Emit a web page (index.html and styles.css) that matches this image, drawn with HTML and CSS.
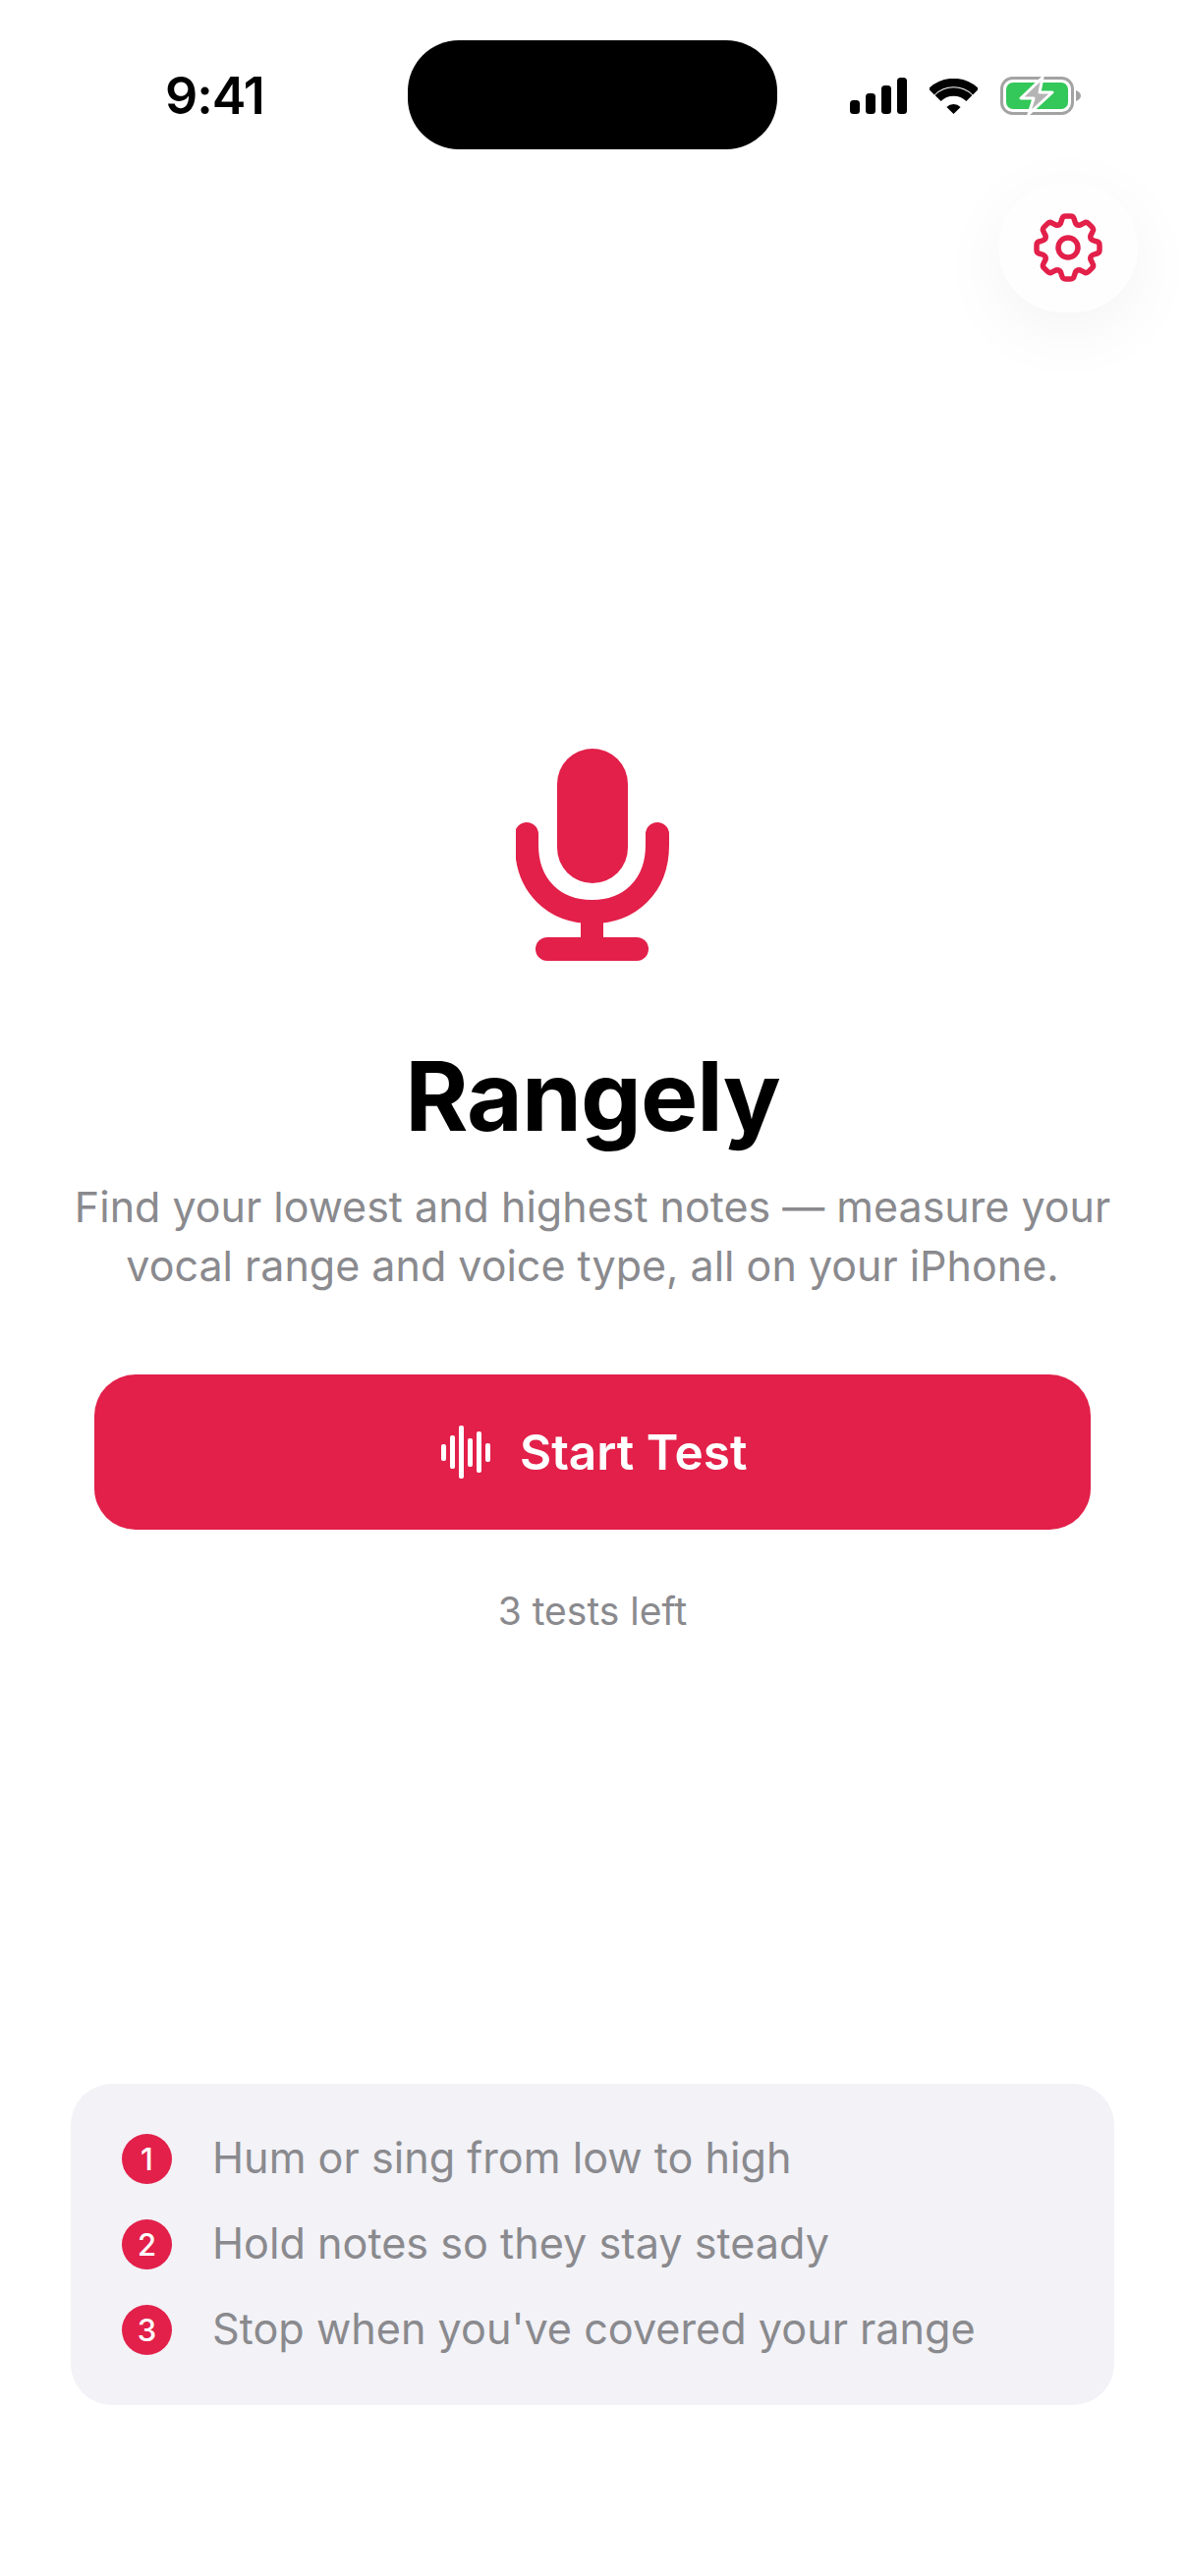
FILE: index.html
```html
<!DOCTYPE html>
<html lang="en">
<head>
  <meta charset="UTF-8" />
  <meta name="viewport" content="width=device-width, initial-scale=1.0"/>
  <title>Rangely</title>
  <link rel="stylesheet" href="styles.css">
</head>
<body>

  <div class="screen">
    <div class="status-bar">
      <div class="status-time">9:41</div>
      <div class="island"></div>
      <div class="status-icons">
        <svg class="icon-signal" viewBox="0 0 58 37">
          <rect x="0" y="23" width="10" height="14" rx="3.5"/>
          <rect x="16" y="16" width="10" height="21" rx="3.5"/>
          <rect x="32" y="8" width="10" height="29" rx="3.5"/>
          <rect x="48" y="0" width="10" height="37" rx="3.5"/>
        </svg>
        <svg class="icon-wifi" viewBox="0 0 49 36">
          <path class="wifi-band" d="M1.9 13.4A32 32 0 0 1 47.1 13.4"/>
          <path class="wifi-band" d="M8.6 20.1A22.5 22.5 0 0 1 40.4 20.1"/>
          <path d="M24.5 36L17.4 28.9A10 10 0 0 1 31.6 28.9Z"/>
        </svg>
        <svg class="icon-battery" viewBox="0 0 82 39">
          <rect class="batt-shell" x="1.5" y="1.5" width="72" height="36" rx="11"/>
          <path class="batt-nub" d="M77 14c3 1 5 3 5 5.500s-2 4.500-5 5.500z"/>
          <rect class="batt-fill" x="6" y="6" width="63" height="27" rx="7"/>
          <path class="batt-bolt" d="M43 1L21 22H34L29 38L53 16H40Z"/>
        </svg>
      </div>
    </div>

    <button class="settings-btn" type="button">
      <svg viewBox="-35 -35 70 70">
        <path class="gear" d="M-7.500-25L-6.200-29Q-5.500-32-2.500-32H2.500Q5.500-32 6.200-29L7.500-25Q9.180-22.170 12.370-22.980L16.120-24.890Q18.740-26.520 20.860-24.400L24.400-20.860Q26.520-18.740 24.890-16.120L22.980-12.370Q22.170-9.180 25-7.500L29-6.200Q32-5.500 32-2.500V2.500Q32 5.500 29 6.200L25 7.500Q22.170 9.180 22.980 12.370L24.890 16.120Q26.520 18.740 24.400 20.860L20.860 24.400Q18.740 26.520 16.120 24.890L12.370 22.980Q9.180 22.170 7.500 25L6.200 29Q5.500 32 2.500 32H-2.500Q-5.500 32-6.200 29L-7.500 25Q-9.180 22.170-12.370 22.980L-16.120 24.890Q-18.740 26.520-20.860 24.400L-24.400 20.860Q-26.520 18.740-24.890 16.120L-22.980 12.370Q-22.170 9.180-25 7.500L-29 6.200Q-32 5.500-32 2.500V-2.500Q-32-5.500-29-6.200L-25-7.500Q-22.170-9.180-22.980-12.370L-24.890-16.120Q-26.520-18.740-24.400-20.860L-20.860-24.400Q-18.740-26.520-16.120-24.890L-12.370-22.980Q-9.180-22.170-7.500-25Z"/>
        <circle class="gear" cx="0" cy="0" r="10"/>
      </svg>
    </button>

    <div class="hero">
      <svg class="mic" viewBox="0 0 157 216">
        <rect class="mic-fill" x="42" y="0" width="72" height="137" rx="36"/>
        <path class="mic-arc" d="M11 87V98C11 140 39 166 77.500 166C116 166 144 140 144 98V87"/>
        <rect class="mic-fill" x="66" y="170" width="23" height="30"/>
        <rect class="mic-fill" x="20" y="192" width="115" height="24" rx="12"/>
      </svg>
      <h1>Rangely</h1>
      <p class="tagline">Find your lowest and highest notes — measure your<br>vocal range and voice type, all on your iPhone.</p>
      <button class="start-btn" type="button">
        <span class="wave">
          <i class="w1"></i><i class="w2"></i><i class="w3"></i><i class="w4"></i><i class="w5"></i><i class="w6"></i>
        </span>
        Start Test
      </button>
      <div class="tests-left">3 tests left</div>
    </div>

    <ul class="tips">
      <li><span class="num">1</span><span class="tip-text">Hum or sing from low to high</span></li>
      <li><span class="num">2</span><span class="tip-text">Hold notes so they stay steady</span></li>
      <li><span class="num">3</span><span class="tip-text">Stop when you've covered your range</span></li>
    </ul>
  </div>

</body>
</html>
```

FILE: styles.css
```css
* {
  box-sizing: border-box;
}
body {
  margin: 0;
  background: #fff;
  font-family: Inter, "Noto Sans", sans-serif;
}
.screen {
  display: flex;
  flex-direction: column;
  height: 2622px;
  overflow: hidden;
}

/* status bar */
.status-bar {
  display: grid;
  grid-template-columns: 1fr 376px 1fr;
  align-items: center;
  height: 111px;
  margin-top: 41px;
}
.status-time {
  padding-left: 168px;
  padding-top: 2px;
  font-size: 52px;
  font-weight: 600;
  letter-spacing: -1px;
  color: #000;
}
.island {
  height: 111px;
  background: #000;
  border-radius: 52px;
}
.status-icons {
  display: flex;
  align-items: center;
  padding-left: 74px;
  padding-top: 2px;
}
.icon-signal {
  width: 58px;
  height: 37px;
}
.icon-wifi {
  width: 49px;
  height: 36px;
  margin-left: 23px;
}
.wifi-band {
  fill: none;
  stroke: #000;
  stroke-width: 8.5;
}
.icon-battery {
  width: 82px;
  height: 39px;
  margin-left: 23px;
}
.batt-shell {
  fill: none;
  stroke: #a3a3a3;
  stroke-width: 3;
}
.batt-nub {
  fill: #a3a3a3;
}
.batt-fill {
  fill: #34c759;
}
.batt-bolt {
  fill: #b4b4b4;
  stroke: #fff;
  stroke-width: 3;
  stroke-linejoin: round;
}

/* settings */
.settings-btn {
  display: flex;
  align-items: center;
  justify-content: center;
  align-self: flex-end;
  width: 142px;
  height: 132px;
  margin: 34px 48px 0 0;
  padding: 0;
  background: #fefefe;
  border: none;
  border-radius: 66px / 66px;
  box-shadow: 0 18px 70px rgba(0,0,0,0.05);
}
.settings-btn svg {
  width: 70px;
  height: 70px;
}
.gear {
  fill: none;
  stroke: #e2204a;
  stroke-width: 5.5;
  stroke-linejoin: round;
}

/* main block */
.hero {
  display: flex;
  flex-direction: column;
  align-items: center;
  margin-top: 444px;
}
.mic {
  width: 157px;
  height: 216px;
}
.mic-fill {
  fill: #e2204a;
}
.mic-arc {
  fill: none;
  stroke: #e2204a;
  stroke-width: 24;
  stroke-linecap: round;
}
h1 {
  margin: 80px 0 0;
  font-size: 98px;
  line-height: 116px;
  font-weight: 700;
  letter-spacing: -1px;
  color: #000;
}
.tagline {
  margin: 24px 0 0;
  font-size: 43px;
  line-height: 60px;
  text-align: center;
  color: #8a8a8e;
}
.start-btn {
  display: flex;
  align-items: center;
  justify-content: center;
  gap: 30px;
  width: 1014px;
  height: 158px;
  margin-top: 81px;
  padding: 0 0 0 4px;
  background: #e2204a;
  color: #fff;
  border: none;
  border-radius: 42px;
  font-family: inherit;
  font-size: 49.500px;
  font-weight: 600;
}
.wave {
  display: flex;
  align-items: center;
  gap: 4.500px;
}
.wave i {
  display: block;
  width: 4.500px;
  background: #fff;
  border-radius: 2px;
}
.w1 { height: 17px; }
.w2 { height: 34px; }
.w3 { height: 54px; }
.w4 { height: 29px; }
.w5 { height: 42px; }
.w6 { height: 19px; }
.tests-left {
  margin-top: 60px;
  font-size: 39px;
  line-height: 46px;
  color: #8a8a8e;
}

/* how-to card */
.tips {
  display: flex;
  flex-direction: column;
  gap: 36px;
  margin: auto 72px 174px;
  padding: 51px 52px;
  list-style: none;
  background: #f2f2f7;
  border-radius: 42px;
}
.tips li {
  display: flex;
  align-items: center;
  gap: 41px;
  height: 51px;
  font-size: 43.200px;
  color: #8a8a8e;
}
.tip-text {
  padding-bottom: 3px;
}
.num {
  display: flex;
  align-items: center;
  justify-content: center;
  flex: none;
  width: 51px;
  height: 51px;
  background: #e2204a;
  color: #fff;
  border-radius: 50%;
  font-size: 31px;
  font-weight: 500;
}
```
